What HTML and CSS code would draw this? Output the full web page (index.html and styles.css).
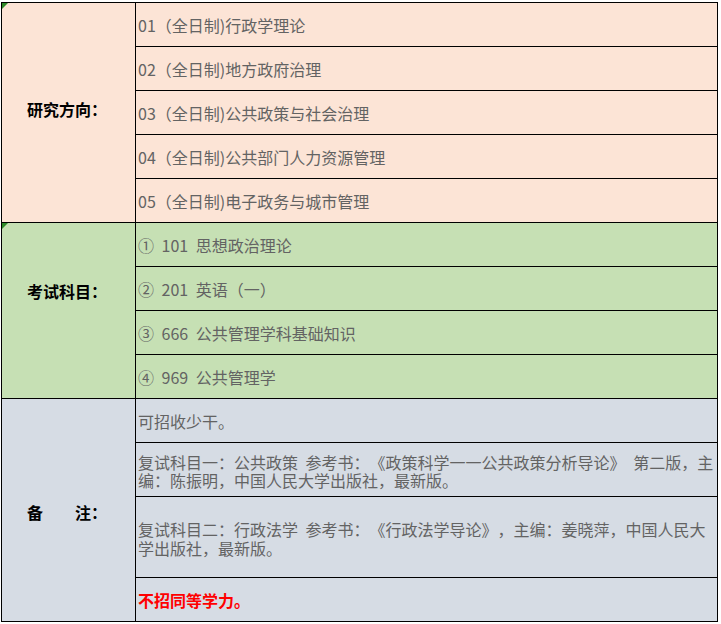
FILE: index.html
```html
<!DOCTYPE html>
<html lang="zh-CN">
<head>
<meta charset="utf-8">
<title>研究方向</title>
<link rel="stylesheet" href="styles.css">
</head>
<body>
<div class="sheet">
  <div class="label pink lab-1 flag"><span>研究方向：</span></div>
  <div class="cell pink"><span>01（全日制)行政学理论</span></div>
  <div class="cell pink"><span>02（全日制)地方政府治理</span></div>
  <div class="cell pink"><span>03（全日制)公共政策与社会治理</span></div>
  <div class="cell pink"><span>04（全日制)公共部门人力资源管理</span></div>
  <div class="cell pink"><span>05（全日制)电子政务与城市管理</span></div>

  <div class="label green lab-2 flag"><span>考试科目：</span></div>
  <div class="cell green"><span>① 101 思想政治理论</span></div>
  <div class="cell green"><span>② 201 英语（一）</span></div>
  <div class="cell green"><span>③ 666 公共管理学科基础知识</span></div>
  <div class="cell green"><span>④ 969 公共管理学</span></div>

  <div class="label gray lab-3"><span>备　　注：</span></div>
  <div class="cell gray"><span>可招收少干。</span></div>
  <div class="cell gray multi"><span>复试科目一：公共政策 参考书：《政策科学一一公共政策分析导论》 第二版，主<br>编：陈振明，中国人民大学出版社，最新版。</span></div>
  <div class="cell gray multi"><span>复试科目二：行政法学 参考书：《行政法学导论》，主编：姜晓萍，中国人民大<br>学出版社，最新版。</span></div>
  <div class="cell gray"><strong class="warn">不招同等学力。</strong></div>
</div>
</body>
</html>
```

FILE: styles.css
```css
* { box-sizing: border-box; }

html, body {
  margin: 0;
  padding: 0;
  background: #ffffff;
}

body {
  padding: 2px 0 0 1px;
  font-family: "Noto Sans CJK SC", "Noto Sans", sans-serif;
  text-spacing-trim: space-all;
}

.sheet {
  display: grid;
  grid-template-columns: 133px 581px;
  grid-template-rows: repeat(9, 43px) 43px 53px 80px 43px;
  gap: 1px;
  padding: 1px;
  width: 717px;
  background: #000000;
}

.pink { background: #fce4d6; }
.green { background: #c6e0b4; }
.gray { background: #d6dce4; }

.label {
  grid-column: 1;
  display: flex;
  align-items: center;
  padding-left: 25px;
  font-size: 16px;
  font-weight: 700;
  color: #000000;
  white-space: nowrap;
  position: relative;
}

.lab-1 { grid-row: 1 / 6; padding-bottom: 8px; }
.lab-2 { grid-row: 6 / 10; padding-bottom: 40px; }
.lab-3 { grid-row: 10 / 14; padding-top: 4px; }

.flag::before {
  content: "";
  position: absolute;
  left: 0;
  top: 0;
  width: 0;
  height: 0;
  border-top: 6px solid #2f8a2a;
  border-right: 6px solid transparent;
}

.cell {
  grid-column: 2;
  display: flex;
  align-items: center;
  padding: 1px 0 0 2px;
  font-size: 16px;
  line-height: 19px;
  color: #636363;
  white-space: nowrap;
  word-spacing: 4px;
}

.multi {
  line-height: 18.5px;
  padding-top: 3px;
}

.warn {
  color: #ff0000;
  font-weight: 700;
}
```
